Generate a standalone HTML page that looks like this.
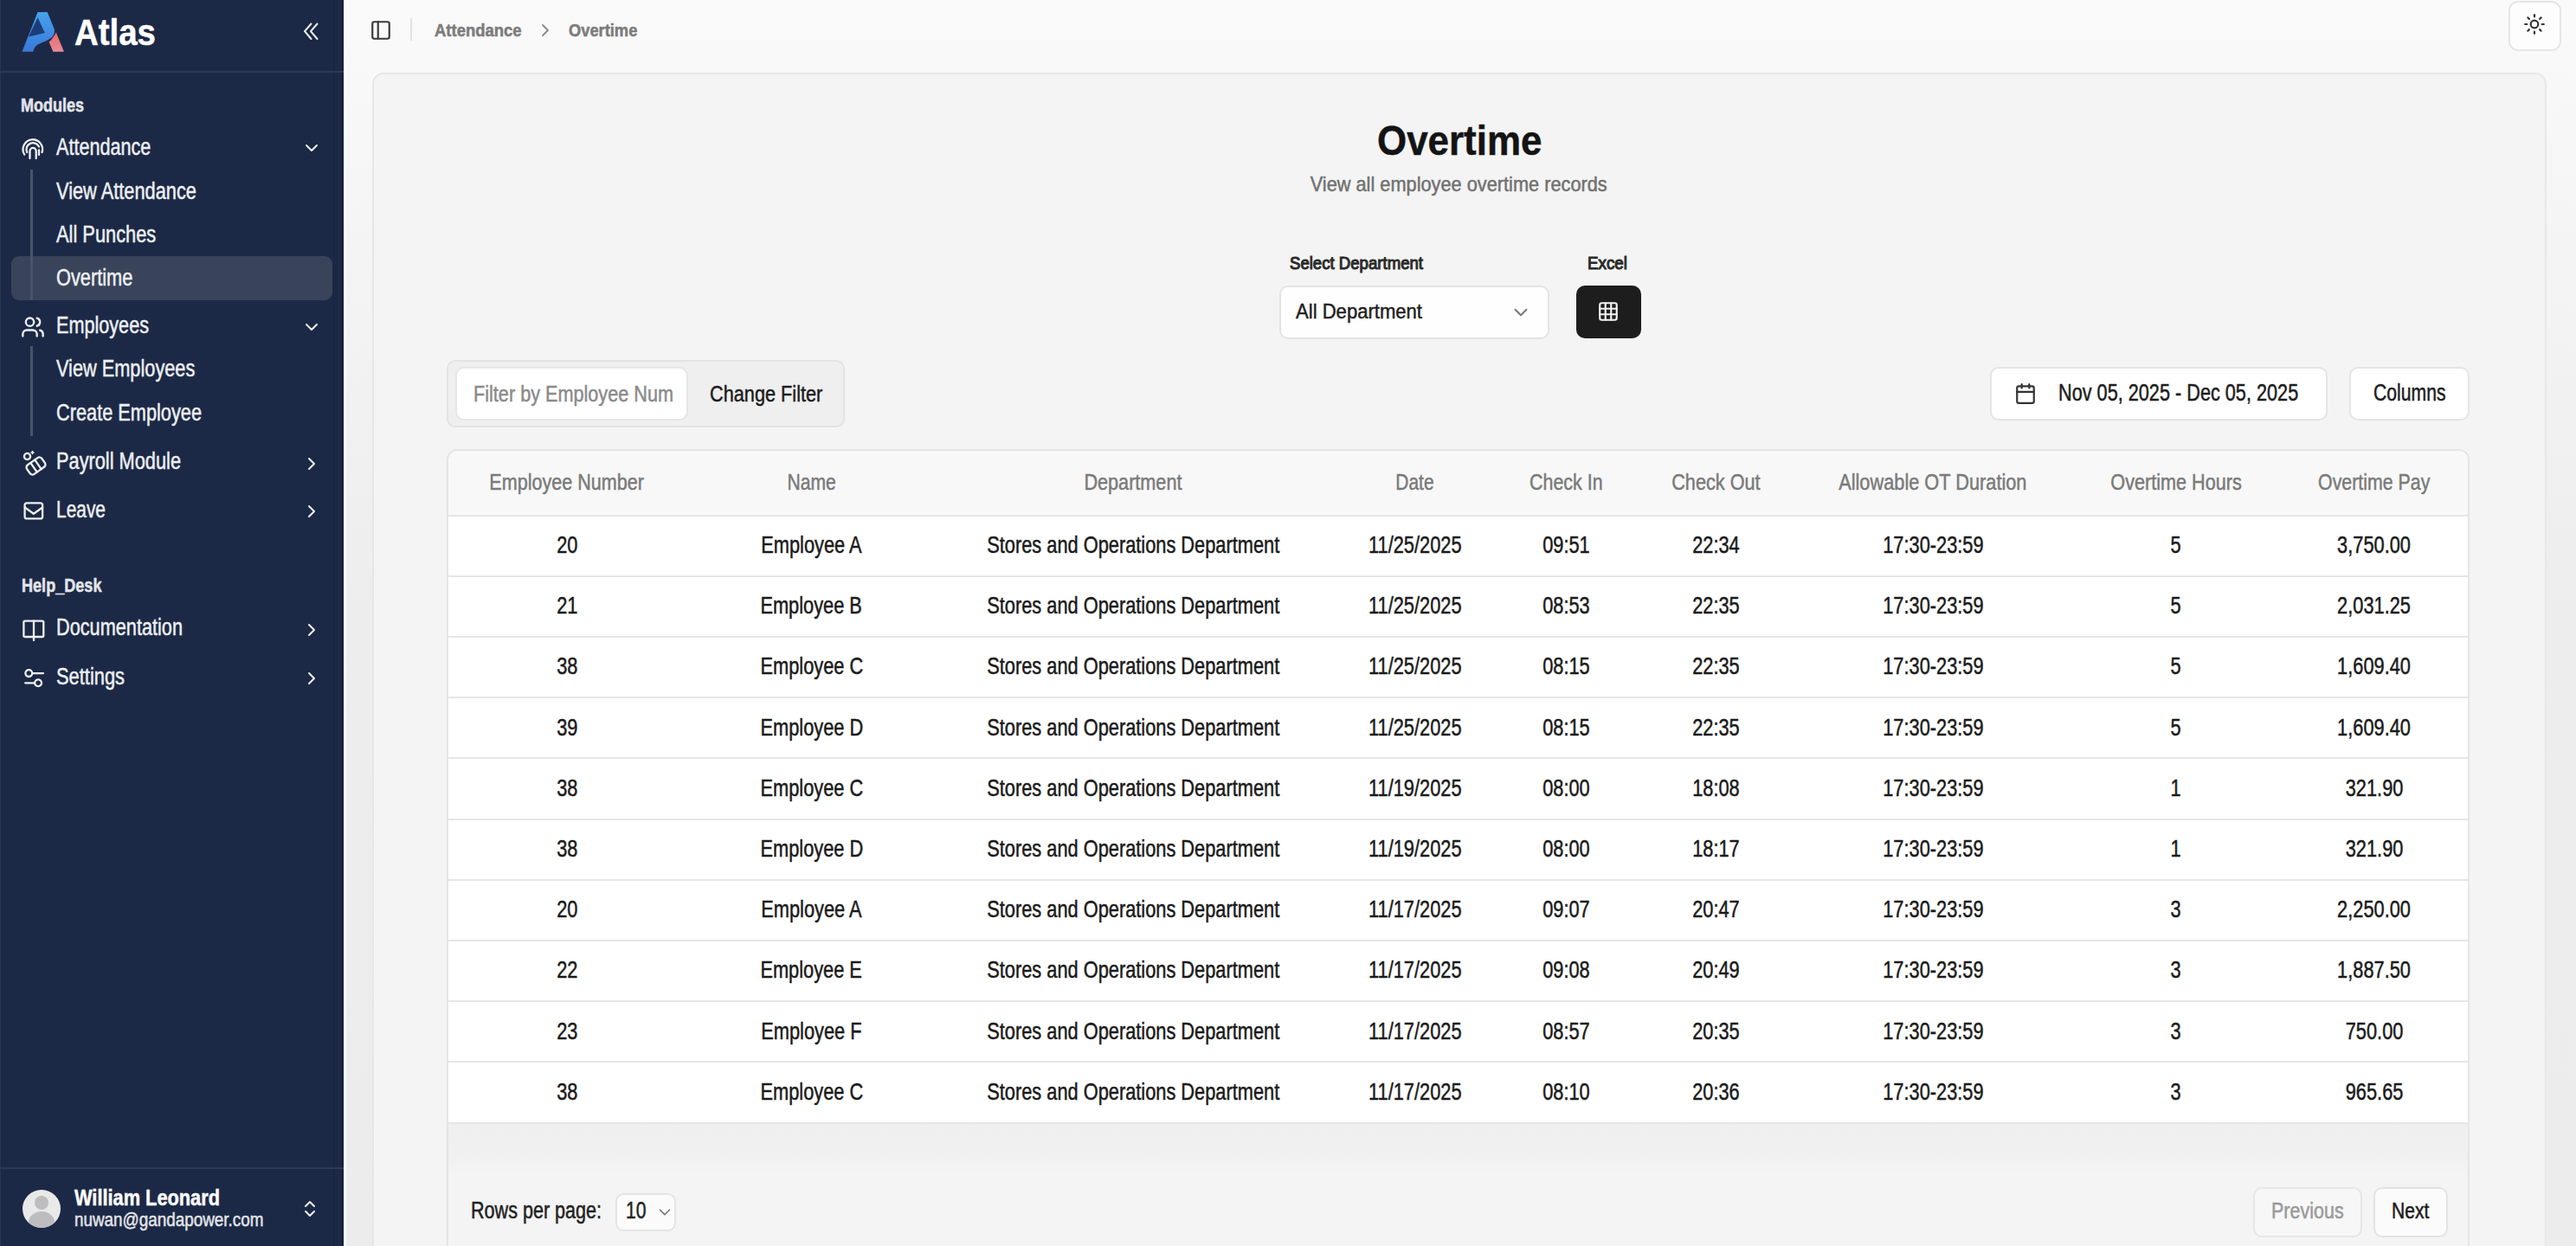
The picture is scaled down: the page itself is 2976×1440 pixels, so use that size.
<!DOCTYPE html>
<html><head><meta charset="utf-8"><title>Overtime</title>
<style>
html,body{margin:0;padding:0;}
body{width:2976px;height:1440px;overflow:hidden;position:relative;background:linear-gradient(180deg,#fafafa 0px,#f4f4f4 300px,#ededed 700px,#ececec 1440px);font-family:"Liberation Sans",sans-serif;}
.abs{position:absolute;}
.t{position:absolute;white-space:nowrap;line-height:1;-webkit-text-stroke:.5px currentColor;}
.tc{position:absolute;width:1200px;text-align:center;white-space:nowrap;line-height:1;}
.tc span{display:inline-block;transform-origin:50% 0;-webkit-text-stroke:.5px currentColor;}
svg{position:absolute;overflow:visible;}
#sb{position:absolute;left:0;top:0;width:397px;height:1440px;background:#1c2946;}
</style></head><body>
<!-- sidebar -->
<div id="sb"></div>
<div class="abs" style="left:0;top:0;width:1px;height:1440px;background:#2a3550"></div>
<div class="abs" style="left:385px;top:0;width:1px;height:1440px;background:#18233d"></div>
<div class="abs" style="left:395px;top:0;width:2px;height:1440px;background:#141c30"></div>
<div class="abs" style="left:397px;top:0;width:3px;height:1440px;background:#ffffff"></div>
<div class="abs" style="left:0;top:82px;width:397px;height:2px;background:#2e3a54"></div>
<div class="abs" style="left:0;top:1349px;width:397px;height:2px;background:#2e3a54"></div>
<!-- active item -->
<div class="abs" style="left:13px;top:296px;width:371px;height:51px;border-radius:9px;background:#39445a"></div>
<!-- sub nav lines -->
<div class="abs" style="left:35px;top:196px;width:3px;height:151px;background:#4a5469"></div>
<div class="abs" style="left:35px;top:400px;width:3px;height:104px;background:#4a5469"></div>
<!-- logo -->
<svg style="left:0;top:0" width="100" height="80" viewBox="0 0 100 80">
 <defs>
  <linearGradient id="lgb" x1="0" y1="0" x2="0" y2="1"><stop offset="0" stop-color="#45a3ec"/><stop offset="1" stop-color="#3b78d8"/></linearGradient>
  <linearGradient id="lgr" x1="0" y1="0" x2="0" y2="1"><stop offset="0" stop-color="#e86a6a"/><stop offset="1" stop-color="#e98a96"/></linearGradient>
 </defs>
 <path d="M25.5 59.8 L43.6 14 L54.7 14 L62.9 34 Q63.5 40 59.5 43.6 Q55 47 44 51.3 Q39.5 54 38.3 59.8 Z" fill="url(#lgb)"/>
 <path d="M33 42.4 L43.6 20.3 L51.8 38.1 Z" fill="#1e3c7a"/>
 <path d="M64.8 37.4 L73.9 59.8 L61.4 59.8 L56.6 48.4 Q60 46 64.8 37.4 Z" fill="url(#lgr)"/>
</svg>
<!-- collapse chevrons -->
<svg style="left:0;top:0" width="400" height="60" viewBox="0 0 400 60" fill="none" stroke="#eef0f4" stroke-width="2" stroke-linecap="round" stroke-linejoin="round"><path d="M359.5 27.5 L352 36.2 L359.5 45"/><path d="M366.5 27.5 L359 36.2 L366.5 45"/></svg>
<!-- nav icons -->
<svg style="left:0;top:0" width="60" height="800" viewBox="0 0 60 800" fill="none" stroke="#eef0f4" stroke-width="2.3" stroke-linecap="round" stroke-linejoin="round">
 <path d="M28.2 178.5 A11.3 11.3 0 1 1 48.6 176"/>
 <path d="M31.2 176 A7 7 0 1 1 45 169.5"/>
 <path d="M34.5 183 V174.5 A3.6 3.6 0 0 1 41.7 174.5 V183"/>
 <path d="M45 173.5 V179"/>
 <g transform="translate(41.5 538.5) rotate(-35)"><rect x="-10.5" y="-6.5" width="21" height="13" rx="3.5"/><path d="M-3 -6.5 V6.5"/><path d="M3 -6.5 V6.5"/></g>
 <circle cx="31.5" cy="527.5" r="3.6"/>
 <path d="M36 523 h3 M37.5 521.5 v3" stroke-width="1.6"/>
 <rect x="28.6" y="581.3" width="20.5" height="18.1" rx="2.5"/>
 <path d="M28.8 586.5 L38.9 593.8 L49 586.5"/>
 <rect x="27.4" y="717.6" width="22.9" height="18.4" rx="1.5"/>
 <path d="M39 717.6 V740"/>
 <path d="M38 778.1 H50"/><circle cx="33.3" cy="778.1" r="3.9"/>
 <path d="M29.2 789.3 H39.5"/><circle cx="44.1" cy="789.3" r="3.9"/>
</svg>
<svg style="left:24px;top:364px" width="28" height="28" viewBox="0 0 24 24" fill="none" stroke="#eef0f4" stroke-width="2" stroke-linecap="round" stroke-linejoin="round"><path d="M16 21v-2a4 4 0 0 0-4-4H6a4 4 0 0 0-4 4v2"/><circle cx="9" cy="7" r="4"/><path d="M22 21v-2a4 4 0 0 0-3-3.87"/><path d="M16 3.13a4 4 0 0 1 0 7.75"/></svg>
<!-- chevrons -->
<svg style="left:348px;top:159px" width="24" height="24" viewBox="0 0 24 24" fill="none" stroke="#eef0f4" stroke-width="2" stroke-linecap="round" stroke-linejoin="round"><path d="m6 9 6 6 6-6"/></svg>
<svg style="left:348px;top:366px" width="24" height="24" viewBox="0 0 24 24" fill="none" stroke="#eef0f4" stroke-width="2" stroke-linecap="round" stroke-linejoin="round"><path d="m6 9 6 6 6-6"/></svg>
<svg style="left:348px;top:524px" width="24" height="24" viewBox="0 0 24 24" fill="none" stroke="#eef0f4" stroke-width="2" stroke-linecap="round" stroke-linejoin="round"><path d="m9 18 6-6-6-6"/></svg>
<svg style="left:348px;top:578.5px" width="24" height="24" viewBox="0 0 24 24" fill="none" stroke="#eef0f4" stroke-width="2" stroke-linecap="round" stroke-linejoin="round"><path d="m9 18 6-6-6-6"/></svg>
<svg style="left:348px;top:716px" width="24" height="24" viewBox="0 0 24 24" fill="none" stroke="#eef0f4" stroke-width="2" stroke-linecap="round" stroke-linejoin="round"><path d="m9 18 6-6-6-6"/></svg>
<svg style="left:348px;top:772px" width="24" height="24" viewBox="0 0 24 24" fill="none" stroke="#eef0f4" stroke-width="2" stroke-linecap="round" stroke-linejoin="round"><path d="m9 18 6-6-6-6"/></svg>
<!-- user -->
<div class="abs" style="left:26px;top:1375px;width:44px;height:44px;border-radius:50%;background:#e9e9e9;overflow:hidden">
  <div class="abs" style="left:14px;top:7px;width:16px;height:16px;border-radius:50%;background:#bdbdc0"></div>
  <div class="abs" style="left:7px;top:25px;width:30px;height:26px;border-radius:50%;background:#bdbdc0"></div>
</div>
<svg style="left:346px;top:1385px" width="24" height="24" viewBox="0 0 24 24" fill="none" stroke="#eef0f4" stroke-width="2" stroke-linecap="round" stroke-linejoin="round"><path d="m7 15 5 5 5-5"/><path d="m7 9 5-5 5 5"/></svg>

<!-- main header -->
<svg style="left:427px;top:22px" width="26" height="26" viewBox="0 0 24 24" fill="none" stroke="#3a3a3a" stroke-width="2" stroke-linecap="round" stroke-linejoin="round"><rect width="18" height="18" x="3" y="3" rx="2"/><path d="M9 3v18"/></svg>
<div class="abs" style="left:474px;top:21px;width:2px;height:26px;background:#e2e2e2"></div>
<svg style="left:618px;top:23px" width="24" height="24" viewBox="0 0 24 24" fill="none" stroke="#8a8a8a" stroke-width="1.8" stroke-linecap="round" stroke-linejoin="round"><path d="m9 18 6-6-6-6"/></svg>
<div class="abs" style="left:2898px;top:1px;width:57px;height:54px;border:2px solid #e6e6e6;border-radius:11px;background:#fdfdfd"></div>
<svg style="left:2915px;top:15px" width="26" height="26" viewBox="0 0 24 24" fill="none" stroke="#333" stroke-width="2" stroke-linecap="round" stroke-linejoin="round"><circle cx="12" cy="12" r="4"/><path d="M12 2v2"/><path d="M12 20v2"/><path d="m4.93 4.93 1.41 1.41"/><path d="m17.66 17.66 1.41 1.41"/><path d="M2 12h2"/><path d="M20 12h2"/><path d="m6.34 17.66-1.41 1.41"/><path d="m19.07 4.93-1.41 1.41"/></svg>

<!-- card -->
<div class="abs" style="left:430px;top:84px;width:2508px;height:1400px;border:2px solid #e7e7e7;border-radius:13px;background:#f4f4f4"></div>

<!-- department select -->
<div class="abs" style="left:1478px;top:330px;width:308px;height:58px;border:2px solid #e4e4e4;border-radius:10px;background:#fefefe"></div>
<svg style="left:1744px;top:348px" width="26" height="26" viewBox="0 0 24 24" fill="none" stroke="#777" stroke-width="1.8" stroke-linecap="round" stroke-linejoin="round"><path d="m6 9 6 6 6-6"/></svg>
<div class="abs" style="left:1821px;top:330px;width:75px;height:61px;border-radius:10px;background:#1d1d1d"></div>
<svg style="left:1845px;top:347px" width="26" height="26" viewBox="0 0 24 24" fill="none" stroke="#f2f2f2" stroke-width="2" stroke-linecap="round" stroke-linejoin="round"><rect width="18" height="18" x="3" y="3" rx="2"/><path d="M3 9h18"/><path d="M3 15h18"/><path d="M9 3v18"/><path d="M15 3v18"/></svg>

<!-- filter group -->
<div class="abs" style="left:516px;top:416px;width:456px;height:74px;border:2px solid #e3e3e3;border-radius:10px;background:#efefef"></div>
<div class="abs" style="left:526px;top:424px;width:265px;height:58px;border:2px solid #e6e6e6;border-radius:10px;background:#ffffff"></div>

<!-- date range + columns -->
<div class="abs" style="left:2299px;top:424px;width:386px;height:58px;border:2px solid #e4e4e4;border-radius:10px;background:#ffffff"></div>
<svg style="left:2327px;top:442px" width="26" height="26" viewBox="0 0 24 24" fill="none" stroke="#333" stroke-width="2" stroke-linecap="round" stroke-linejoin="round"><path d="M8 2v4"/><path d="M16 2v4"/><rect width="18" height="18" x="3" y="4" rx="2"/><path d="M3 10h18"/></svg>
<div class="abs" style="left:2714px;top:424px;width:135px;height:58px;border:2px solid #e4e4e4;border-radius:10px;background:#ffffff"></div>

<!-- table container -->
<div class="abs" style="left:516px;top:519px;width:2333px;height:1000px;border:2px solid #e5e5e5;border-radius:12px;background:#f4f4f4;overflow:hidden">
  <div class="abs" style="left:0;top:0;width:2333px;height:75px;background:#f8f8f8"></div>
  <div class="abs" style="left:0;top:75px;width:2333px;height:702px;background:#ffffff"></div>
  <div class="abs" style="left:0;top:777px;width:2333px;height:60px;background:linear-gradient(180deg,#efefef 0,#f0f0f0 60%,#f4f4f4 100%)"></div>
</div>
<!-- row lines -->
<div class="abs" style="left:518px;top:594.5px;width:2333px;height:2px;background:#e6e6e6"></div><div class="abs" style="left:518px;top:664.7px;width:2333px;height:2px;background:#e6e6e6"></div><div class="abs" style="left:518px;top:734.9px;width:2333px;height:2px;background:#e6e6e6"></div><div class="abs" style="left:518px;top:805.1px;width:2333px;height:2px;background:#e6e6e6"></div><div class="abs" style="left:518px;top:875.3px;width:2333px;height:2px;background:#e6e6e6"></div><div class="abs" style="left:518px;top:945.5px;width:2333px;height:2px;background:#e6e6e6"></div><div class="abs" style="left:518px;top:1015.7px;width:2333px;height:2px;background:#e6e6e6"></div><div class="abs" style="left:518px;top:1085.9px;width:2333px;height:2px;background:#e6e6e6"></div><div class="abs" style="left:518px;top:1156.1px;width:2333px;height:2px;background:#e6e6e6"></div><div class="abs" style="left:518px;top:1226.3px;width:2333px;height:2px;background:#e6e6e6"></div><div class="abs" style="left:518px;top:1296.5px;width:2333px;height:2px;background:#e6e6e6"></div>
<!-- rows select -->
<div class="abs" style="left:711px;top:1379px;width:66px;height:40px;border:2px solid #e4e4e4;border-radius:9px;background:#fbfbfb"></div>
<svg style="left:757px;top:1390px" width="22" height="22" viewBox="0 0 24 24" fill="none" stroke="#777" stroke-width="1.8" stroke-linecap="round" stroke-linejoin="round"><path d="m6 9 6 6 6-6"/></svg>
<div class="abs" style="left:2603px;top:1372px;width:122px;height:54px;border:2px solid #e6e6e6;border-radius:10px;background:#f7f7f7"></div>
<div class="abs" style="left:2742px;top:1372px;width:82px;height:54px;border:2px solid #e2e2e2;border-radius:10px;background:#fbfbfb"></div>

<div class="t" id="t0" style="left:86px;top:17.30px;font-size:42px;font-weight:700;color:#ffffff;transform:scaleX(0.9153);transform-origin:0 0;">Atlas</div>
<div class="t" id="t1" style="left:24px;top:110.80px;font-size:22px;font-weight:700;color:#e3e5ea;transform:scaleX(0.8181);transform-origin:0 0;">Modules</div>
<div class="t" id="t2" style="left:65px;top:157.05px;font-size:27px;font-weight:400;color:#eef0f4;transform:scaleX(0.8008);transform-origin:0 0;">Attendance</div>
<div class="t" id="t3" style="left:65px;top:207.55px;font-size:27px;font-weight:400;color:#eef0f4;transform:scaleX(0.8069);transform-origin:0 0;">View Attendance</div>
<div class="t" id="t4" style="left:65px;top:258.05px;font-size:27px;font-weight:400;color:#eef0f4;transform:scaleX(0.8086);transform-origin:0 0;">All Punches</div>
<div class="t" id="t5" style="left:65px;top:307.85px;font-size:27px;font-weight:400;color:#eef0f4;transform:scaleX(0.8062);transform-origin:0 0;">Overtime</div>
<div class="t" id="t6" style="left:65px;top:363.45px;font-size:27px;font-weight:400;color:#eef0f4;transform:scaleX(0.8010);transform-origin:0 0;">Employees</div>
<div class="t" id="t7" style="left:65px;top:412.75px;font-size:27px;font-weight:400;color:#eef0f4;transform:scaleX(0.8051);transform-origin:0 0;">View Employees</div>
<div class="t" id="t8" style="left:65px;top:463.85px;font-size:27px;font-weight:400;color:#eef0f4;transform:scaleX(0.8053);transform-origin:0 0;">Create Employee</div>
<div class="t" id="t9" style="left:65px;top:519.55px;font-size:27px;font-weight:400;color:#eef0f4;transform:scaleX(0.8063);transform-origin:0 0;">Payroll Module</div>
<div class="t" id="t10" style="left:65px;top:576.05px;font-size:27px;font-weight:400;color:#eef0f4;transform:scaleX(0.7747);transform-origin:0 0;">Leave</div>
<div class="t" id="t11" style="left:65px;top:712.35px;font-size:27px;font-weight:400;color:#eef0f4;transform:scaleX(0.8039);transform-origin:0 0;">Documentation</div>
<div class="t" id="t12" style="left:65px;top:768.75px;font-size:27px;font-weight:400;color:#eef0f4;transform:scaleX(0.8097);transform-origin:0 0;">Settings</div>
<div class="t" id="t13" style="left:24.5px;top:666.00px;font-size:22px;font-weight:700;color:#e3e5ea;transform:scaleX(0.8221);transform-origin:0 0;">Help_Desk</div>
<div class="t" id="t14" style="left:85.6px;top:1371.20px;font-size:26px;font-weight:700;color:#ffffff;transform:scaleX(0.8376);transform-origin:0 0;">William Leonard</div>
<div class="t" id="t15" style="left:85.6px;top:1399.10px;font-size:22px;font-weight:400;color:#e3e5ea;transform:scaleX(0.8574);transform-origin:0 0;">nuwan@gandapower.com</div>
<div class="t" id="t16" style="left:502px;top:23.75px;font-size:21px;font-weight:700;color:#7b7b7b;transform:scaleX(0.8797);transform-origin:0 0;">Attendance</div>
<div class="t" id="t17" style="left:657px;top:23.75px;font-size:21px;font-weight:700;color:#7b7b7b;transform:scaleX(0.8710);transform-origin:0 0;">Overtime</div>
<div class="tc" style="left:1086.20px;top:138.15px;font-size:49px;font-weight:700;color:#141414;"><span id="t18" style="transform:scaleX(0.8963);">Overtime</span></div>
<div class="tc" style="left:1085.50px;top:200.80px;font-size:24px;font-weight:400;color:#707070;"><span id="t19" style="transform:scaleX(0.9065);">View all employee overtime records</span></div>
<div class="t" id="t20" style="left:1490px;top:294.27px;font-size:20.5px;font-weight:400;color:#2a2a2a;transform:scaleX(0.9070);transform-origin:0 0;-webkit-text-stroke:1.1px currentColor;">Select Department</div>
<div class="t" id="t21" style="left:1834px;top:294.27px;font-size:20.5px;font-weight:400;color:#2a2a2a;transform:scaleX(0.9174);transform-origin:0 0;-webkit-text-stroke:1.1px currentColor;">Excel</div>
<div class="t" id="t22" style="left:1497px;top:347.98px;font-size:24.5px;font-weight:400;color:#1e1e1e;transform:scaleX(0.9010);transform-origin:0 0;">All Department</div>
<div class="t" id="t23" style="left:546.6px;top:441.60px;font-size:26px;font-weight:400;color:#8a8a8a;transform:scaleX(0.8327);transform-origin:0 0;">Filter by Employee Num</div>
<div class="t" id="t24" style="left:820px;top:441.60px;font-size:26px;font-weight:400;color:#1c1c1c;transform:scaleX(0.8348);transform-origin:0 0;">Change Filter</div>
<div class="t" id="t25" style="left:2377.8px;top:441.05px;font-size:27px;font-weight:400;color:#1c1c1c;transform:scaleX(0.8029);transform-origin:0 0;">Nov 05, 2025 - Dec 05, 2025</div>
<div class="t" id="t26" style="left:2742.4px;top:441.05px;font-size:27px;font-weight:400;color:#1c1c1c;transform:scaleX(0.7846);transform-origin:0 0;">Columns</div>
<div class="tc" style="left:55.00px;top:543.90px;font-size:26px;font-weight:400;color:#7a7a7a;"><span id="t27" style="transform:scaleX(0.8295);">Employee Number</span></div>
<div class="tc" style="left:337.50px;top:543.90px;font-size:26px;font-weight:400;color:#7a7a7a;"><span id="t28" style="transform:scaleX(0.8117);">Name</span></div>
<div class="tc" style="left:709.00px;top:543.90px;font-size:26px;font-weight:400;color:#7a7a7a;"><span id="t29" style="transform:scaleX(0.8318);">Department</span></div>
<div class="tc" style="left:1034.50px;top:543.90px;font-size:26px;font-weight:400;color:#7a7a7a;"><span id="t30" style="transform:scaleX(0.8048);">Date</span></div>
<div class="tc" style="left:1209.00px;top:543.90px;font-size:26px;font-weight:400;color:#7a7a7a;"><span id="t31" style="transform:scaleX(0.8235);">Check In</span></div>
<div class="tc" style="left:1382.00px;top:543.90px;font-size:26px;font-weight:400;color:#7a7a7a;"><span id="t32" style="transform:scaleX(0.8337);">Check Out</span></div>
<div class="tc" style="left:1633.00px;top:543.90px;font-size:26px;font-weight:400;color:#7a7a7a;"><span id="t33" style="transform:scaleX(0.8369);">Allowable OT Duration</span></div>
<div class="tc" style="left:1914.00px;top:543.90px;font-size:26px;font-weight:400;color:#7a7a7a;"><span id="t34" style="transform:scaleX(0.8317);">Overtime Hours</span></div>
<div class="tc" style="left:2143.00px;top:543.90px;font-size:26px;font-weight:400;color:#7a7a7a;"><span id="t35" style="transform:scaleX(0.8210);">Overtime Pay</span></div>
<div class="tc" style="left:55.00px;top:615.92px;font-size:27.5px;font-weight:400;color:#1a1a1a;"><span id="t36" style="transform:scaleX(0.7925);">20</span></div>
<div class="tc" style="left:337.50px;top:615.92px;font-size:27.5px;font-weight:400;color:#1a1a1a;"><span id="t37" style="transform:scaleX(0.7925);">Employee A</span></div>
<div class="tc" style="left:709.00px;top:615.92px;font-size:27.5px;font-weight:400;color:#1a1a1a;"><span id="t38" style="transform:scaleX(0.7925);">Stores and Operations Department</span></div>
<div class="tc" style="left:1034.50px;top:615.92px;font-size:27.5px;font-weight:400;color:#1a1a1a;"><span id="t39" style="transform:scaleX(0.7925);">11/25/2025</span></div>
<div class="tc" style="left:1209.00px;top:615.92px;font-size:27.5px;font-weight:400;color:#1a1a1a;"><span id="t40" style="transform:scaleX(0.7925);">09:51</span></div>
<div class="tc" style="left:1382.00px;top:615.92px;font-size:27.5px;font-weight:400;color:#1a1a1a;"><span id="t41" style="transform:scaleX(0.7925);">22:34</span></div>
<div class="tc" style="left:1633.00px;top:615.92px;font-size:27.5px;font-weight:400;color:#1a1a1a;"><span id="t42" style="transform:scaleX(0.7925);">17:30-23:59</span></div>
<div class="tc" style="left:1914.00px;top:615.92px;font-size:27.5px;font-weight:400;color:#1a1a1a;"><span id="t43" style="transform:scaleX(0.7925);">5</span></div>
<div class="tc" style="left:2143.00px;top:615.92px;font-size:27.5px;font-weight:400;color:#1a1a1a;"><span id="t44" style="transform:scaleX(0.7925);">3,750.00</span></div>
<div class="tc" style="left:55.00px;top:686.12px;font-size:27.5px;font-weight:400;color:#1a1a1a;"><span id="t45" style="transform:scaleX(0.7925);">21</span></div>
<div class="tc" style="left:337.50px;top:686.12px;font-size:27.5px;font-weight:400;color:#1a1a1a;"><span id="t46" style="transform:scaleX(0.7925);">Employee B</span></div>
<div class="tc" style="left:709.00px;top:686.12px;font-size:27.5px;font-weight:400;color:#1a1a1a;"><span id="t47" style="transform:scaleX(0.7925);">Stores and Operations Department</span></div>
<div class="tc" style="left:1034.50px;top:686.12px;font-size:27.5px;font-weight:400;color:#1a1a1a;"><span id="t48" style="transform:scaleX(0.7925);">11/25/2025</span></div>
<div class="tc" style="left:1209.00px;top:686.12px;font-size:27.5px;font-weight:400;color:#1a1a1a;"><span id="t49" style="transform:scaleX(0.7925);">08:53</span></div>
<div class="tc" style="left:1382.00px;top:686.12px;font-size:27.5px;font-weight:400;color:#1a1a1a;"><span id="t50" style="transform:scaleX(0.7925);">22:35</span></div>
<div class="tc" style="left:1633.00px;top:686.12px;font-size:27.5px;font-weight:400;color:#1a1a1a;"><span id="t51" style="transform:scaleX(0.7925);">17:30-23:59</span></div>
<div class="tc" style="left:1914.00px;top:686.12px;font-size:27.5px;font-weight:400;color:#1a1a1a;"><span id="t52" style="transform:scaleX(0.7925);">5</span></div>
<div class="tc" style="left:2143.00px;top:686.12px;font-size:27.5px;font-weight:400;color:#1a1a1a;"><span id="t53" style="transform:scaleX(0.7925);">2,031.25</span></div>
<div class="tc" style="left:55.00px;top:756.32px;font-size:27.5px;font-weight:400;color:#1a1a1a;"><span id="t54" style="transform:scaleX(0.7925);">38</span></div>
<div class="tc" style="left:337.50px;top:756.32px;font-size:27.5px;font-weight:400;color:#1a1a1a;"><span id="t55" style="transform:scaleX(0.7925);">Employee C</span></div>
<div class="tc" style="left:709.00px;top:756.32px;font-size:27.5px;font-weight:400;color:#1a1a1a;"><span id="t56" style="transform:scaleX(0.7925);">Stores and Operations Department</span></div>
<div class="tc" style="left:1034.50px;top:756.32px;font-size:27.5px;font-weight:400;color:#1a1a1a;"><span id="t57" style="transform:scaleX(0.7925);">11/25/2025</span></div>
<div class="tc" style="left:1209.00px;top:756.32px;font-size:27.5px;font-weight:400;color:#1a1a1a;"><span id="t58" style="transform:scaleX(0.7925);">08:15</span></div>
<div class="tc" style="left:1382.00px;top:756.32px;font-size:27.5px;font-weight:400;color:#1a1a1a;"><span id="t59" style="transform:scaleX(0.7925);">22:35</span></div>
<div class="tc" style="left:1633.00px;top:756.32px;font-size:27.5px;font-weight:400;color:#1a1a1a;"><span id="t60" style="transform:scaleX(0.7925);">17:30-23:59</span></div>
<div class="tc" style="left:1914.00px;top:756.32px;font-size:27.5px;font-weight:400;color:#1a1a1a;"><span id="t61" style="transform:scaleX(0.7925);">5</span></div>
<div class="tc" style="left:2143.00px;top:756.32px;font-size:27.5px;font-weight:400;color:#1a1a1a;"><span id="t62" style="transform:scaleX(0.7925);">1,609.40</span></div>
<div class="tc" style="left:55.00px;top:826.52px;font-size:27.5px;font-weight:400;color:#1a1a1a;"><span id="t63" style="transform:scaleX(0.7925);">39</span></div>
<div class="tc" style="left:337.50px;top:826.52px;font-size:27.5px;font-weight:400;color:#1a1a1a;"><span id="t64" style="transform:scaleX(0.7925);">Employee D</span></div>
<div class="tc" style="left:709.00px;top:826.52px;font-size:27.5px;font-weight:400;color:#1a1a1a;"><span id="t65" style="transform:scaleX(0.7925);">Stores and Operations Department</span></div>
<div class="tc" style="left:1034.50px;top:826.52px;font-size:27.5px;font-weight:400;color:#1a1a1a;"><span id="t66" style="transform:scaleX(0.7925);">11/25/2025</span></div>
<div class="tc" style="left:1209.00px;top:826.52px;font-size:27.5px;font-weight:400;color:#1a1a1a;"><span id="t67" style="transform:scaleX(0.7925);">08:15</span></div>
<div class="tc" style="left:1382.00px;top:826.52px;font-size:27.5px;font-weight:400;color:#1a1a1a;"><span id="t68" style="transform:scaleX(0.7925);">22:35</span></div>
<div class="tc" style="left:1633.00px;top:826.52px;font-size:27.5px;font-weight:400;color:#1a1a1a;"><span id="t69" style="transform:scaleX(0.7925);">17:30-23:59</span></div>
<div class="tc" style="left:1914.00px;top:826.52px;font-size:27.5px;font-weight:400;color:#1a1a1a;"><span id="t70" style="transform:scaleX(0.7925);">5</span></div>
<div class="tc" style="left:2143.00px;top:826.52px;font-size:27.5px;font-weight:400;color:#1a1a1a;"><span id="t71" style="transform:scaleX(0.7925);">1,609.40</span></div>
<div class="tc" style="left:55.00px;top:896.72px;font-size:27.5px;font-weight:400;color:#1a1a1a;"><span id="t72" style="transform:scaleX(0.7925);">38</span></div>
<div class="tc" style="left:337.50px;top:896.72px;font-size:27.5px;font-weight:400;color:#1a1a1a;"><span id="t73" style="transform:scaleX(0.7925);">Employee C</span></div>
<div class="tc" style="left:709.00px;top:896.72px;font-size:27.5px;font-weight:400;color:#1a1a1a;"><span id="t74" style="transform:scaleX(0.7925);">Stores and Operations Department</span></div>
<div class="tc" style="left:1034.50px;top:896.72px;font-size:27.5px;font-weight:400;color:#1a1a1a;"><span id="t75" style="transform:scaleX(0.7925);">11/19/2025</span></div>
<div class="tc" style="left:1209.00px;top:896.72px;font-size:27.5px;font-weight:400;color:#1a1a1a;"><span id="t76" style="transform:scaleX(0.7925);">08:00</span></div>
<div class="tc" style="left:1382.00px;top:896.72px;font-size:27.5px;font-weight:400;color:#1a1a1a;"><span id="t77" style="transform:scaleX(0.7925);">18:08</span></div>
<div class="tc" style="left:1633.00px;top:896.72px;font-size:27.5px;font-weight:400;color:#1a1a1a;"><span id="t78" style="transform:scaleX(0.7925);">17:30-23:59</span></div>
<div class="tc" style="left:1914.00px;top:896.72px;font-size:27.5px;font-weight:400;color:#1a1a1a;"><span id="t79" style="transform:scaleX(0.7925);">1</span></div>
<div class="tc" style="left:2143.00px;top:896.72px;font-size:27.5px;font-weight:400;color:#1a1a1a;"><span id="t80" style="transform:scaleX(0.7925);">321.90</span></div>
<div class="tc" style="left:55.00px;top:966.92px;font-size:27.5px;font-weight:400;color:#1a1a1a;"><span id="t81" style="transform:scaleX(0.7925);">38</span></div>
<div class="tc" style="left:337.50px;top:966.92px;font-size:27.5px;font-weight:400;color:#1a1a1a;"><span id="t82" style="transform:scaleX(0.7925);">Employee D</span></div>
<div class="tc" style="left:709.00px;top:966.92px;font-size:27.5px;font-weight:400;color:#1a1a1a;"><span id="t83" style="transform:scaleX(0.7925);">Stores and Operations Department</span></div>
<div class="tc" style="left:1034.50px;top:966.92px;font-size:27.5px;font-weight:400;color:#1a1a1a;"><span id="t84" style="transform:scaleX(0.7925);">11/19/2025</span></div>
<div class="tc" style="left:1209.00px;top:966.92px;font-size:27.5px;font-weight:400;color:#1a1a1a;"><span id="t85" style="transform:scaleX(0.7925);">08:00</span></div>
<div class="tc" style="left:1382.00px;top:966.92px;font-size:27.5px;font-weight:400;color:#1a1a1a;"><span id="t86" style="transform:scaleX(0.7925);">18:17</span></div>
<div class="tc" style="left:1633.00px;top:966.92px;font-size:27.5px;font-weight:400;color:#1a1a1a;"><span id="t87" style="transform:scaleX(0.7925);">17:30-23:59</span></div>
<div class="tc" style="left:1914.00px;top:966.92px;font-size:27.5px;font-weight:400;color:#1a1a1a;"><span id="t88" style="transform:scaleX(0.7925);">1</span></div>
<div class="tc" style="left:2143.00px;top:966.92px;font-size:27.5px;font-weight:400;color:#1a1a1a;"><span id="t89" style="transform:scaleX(0.7925);">321.90</span></div>
<div class="tc" style="left:55.00px;top:1037.12px;font-size:27.5px;font-weight:400;color:#1a1a1a;"><span id="t90" style="transform:scaleX(0.7925);">20</span></div>
<div class="tc" style="left:337.50px;top:1037.12px;font-size:27.5px;font-weight:400;color:#1a1a1a;"><span id="t91" style="transform:scaleX(0.7925);">Employee A</span></div>
<div class="tc" style="left:709.00px;top:1037.12px;font-size:27.5px;font-weight:400;color:#1a1a1a;"><span id="t92" style="transform:scaleX(0.7925);">Stores and Operations Department</span></div>
<div class="tc" style="left:1034.50px;top:1037.12px;font-size:27.5px;font-weight:400;color:#1a1a1a;"><span id="t93" style="transform:scaleX(0.7925);">11/17/2025</span></div>
<div class="tc" style="left:1209.00px;top:1037.12px;font-size:27.5px;font-weight:400;color:#1a1a1a;"><span id="t94" style="transform:scaleX(0.7925);">09:07</span></div>
<div class="tc" style="left:1382.00px;top:1037.12px;font-size:27.5px;font-weight:400;color:#1a1a1a;"><span id="t95" style="transform:scaleX(0.7925);">20:47</span></div>
<div class="tc" style="left:1633.00px;top:1037.12px;font-size:27.5px;font-weight:400;color:#1a1a1a;"><span id="t96" style="transform:scaleX(0.7925);">17:30-23:59</span></div>
<div class="tc" style="left:1914.00px;top:1037.12px;font-size:27.5px;font-weight:400;color:#1a1a1a;"><span id="t97" style="transform:scaleX(0.7925);">3</span></div>
<div class="tc" style="left:2143.00px;top:1037.12px;font-size:27.5px;font-weight:400;color:#1a1a1a;"><span id="t98" style="transform:scaleX(0.7925);">2,250.00</span></div>
<div class="tc" style="left:55.00px;top:1107.33px;font-size:27.5px;font-weight:400;color:#1a1a1a;"><span id="t99" style="transform:scaleX(0.7925);">22</span></div>
<div class="tc" style="left:337.50px;top:1107.33px;font-size:27.5px;font-weight:400;color:#1a1a1a;"><span id="t100" style="transform:scaleX(0.7925);">Employee E</span></div>
<div class="tc" style="left:709.00px;top:1107.33px;font-size:27.5px;font-weight:400;color:#1a1a1a;"><span id="t101" style="transform:scaleX(0.7925);">Stores and Operations Department</span></div>
<div class="tc" style="left:1034.50px;top:1107.33px;font-size:27.5px;font-weight:400;color:#1a1a1a;"><span id="t102" style="transform:scaleX(0.7925);">11/17/2025</span></div>
<div class="tc" style="left:1209.00px;top:1107.33px;font-size:27.5px;font-weight:400;color:#1a1a1a;"><span id="t103" style="transform:scaleX(0.7925);">09:08</span></div>
<div class="tc" style="left:1382.00px;top:1107.33px;font-size:27.5px;font-weight:400;color:#1a1a1a;"><span id="t104" style="transform:scaleX(0.7925);">20:49</span></div>
<div class="tc" style="left:1633.00px;top:1107.33px;font-size:27.5px;font-weight:400;color:#1a1a1a;"><span id="t105" style="transform:scaleX(0.7925);">17:30-23:59</span></div>
<div class="tc" style="left:1914.00px;top:1107.33px;font-size:27.5px;font-weight:400;color:#1a1a1a;"><span id="t106" style="transform:scaleX(0.7925);">3</span></div>
<div class="tc" style="left:2143.00px;top:1107.33px;font-size:27.5px;font-weight:400;color:#1a1a1a;"><span id="t107" style="transform:scaleX(0.7925);">1,887.50</span></div>
<div class="tc" style="left:55.00px;top:1177.53px;font-size:27.5px;font-weight:400;color:#1a1a1a;"><span id="t108" style="transform:scaleX(0.7925);">23</span></div>
<div class="tc" style="left:337.50px;top:1177.53px;font-size:27.5px;font-weight:400;color:#1a1a1a;"><span id="t109" style="transform:scaleX(0.7925);">Employee F</span></div>
<div class="tc" style="left:709.00px;top:1177.53px;font-size:27.5px;font-weight:400;color:#1a1a1a;"><span id="t110" style="transform:scaleX(0.7925);">Stores and Operations Department</span></div>
<div class="tc" style="left:1034.50px;top:1177.53px;font-size:27.5px;font-weight:400;color:#1a1a1a;"><span id="t111" style="transform:scaleX(0.7925);">11/17/2025</span></div>
<div class="tc" style="left:1209.00px;top:1177.53px;font-size:27.5px;font-weight:400;color:#1a1a1a;"><span id="t112" style="transform:scaleX(0.7925);">08:57</span></div>
<div class="tc" style="left:1382.00px;top:1177.53px;font-size:27.5px;font-weight:400;color:#1a1a1a;"><span id="t113" style="transform:scaleX(0.7925);">20:35</span></div>
<div class="tc" style="left:1633.00px;top:1177.53px;font-size:27.5px;font-weight:400;color:#1a1a1a;"><span id="t114" style="transform:scaleX(0.7925);">17:30-23:59</span></div>
<div class="tc" style="left:1914.00px;top:1177.53px;font-size:27.5px;font-weight:400;color:#1a1a1a;"><span id="t115" style="transform:scaleX(0.7925);">3</span></div>
<div class="tc" style="left:2143.00px;top:1177.53px;font-size:27.5px;font-weight:400;color:#1a1a1a;"><span id="t116" style="transform:scaleX(0.7925);">750.00</span></div>
<div class="tc" style="left:55.00px;top:1247.72px;font-size:27.5px;font-weight:400;color:#1a1a1a;"><span id="t117" style="transform:scaleX(0.7925);">38</span></div>
<div class="tc" style="left:337.50px;top:1247.72px;font-size:27.5px;font-weight:400;color:#1a1a1a;"><span id="t118" style="transform:scaleX(0.7925);">Employee C</span></div>
<div class="tc" style="left:709.00px;top:1247.72px;font-size:27.5px;font-weight:400;color:#1a1a1a;"><span id="t119" style="transform:scaleX(0.7925);">Stores and Operations Department</span></div>
<div class="tc" style="left:1034.50px;top:1247.72px;font-size:27.5px;font-weight:400;color:#1a1a1a;"><span id="t120" style="transform:scaleX(0.7925);">11/17/2025</span></div>
<div class="tc" style="left:1209.00px;top:1247.72px;font-size:27.5px;font-weight:400;color:#1a1a1a;"><span id="t121" style="transform:scaleX(0.7925);">08:10</span></div>
<div class="tc" style="left:1382.00px;top:1247.72px;font-size:27.5px;font-weight:400;color:#1a1a1a;"><span id="t122" style="transform:scaleX(0.7925);">20:36</span></div>
<div class="tc" style="left:1633.00px;top:1247.72px;font-size:27.5px;font-weight:400;color:#1a1a1a;"><span id="t123" style="transform:scaleX(0.7925);">17:30-23:59</span></div>
<div class="tc" style="left:1914.00px;top:1247.72px;font-size:27.5px;font-weight:400;color:#1a1a1a;"><span id="t124" style="transform:scaleX(0.7925);">3</span></div>
<div class="tc" style="left:2143.00px;top:1247.72px;font-size:27.5px;font-weight:400;color:#1a1a1a;"><span id="t125" style="transform:scaleX(0.7925);">965.65</span></div>
<div class="t" id="t126" style="left:544px;top:1386.25px;font-size:27px;font-weight:400;color:#222222;transform:scaleX(0.7985);transform-origin:0 0;">Rows per page:</div>
<div class="t" id="t127" style="left:723px;top:1386.25px;font-size:27px;font-weight:400;color:#222222;transform:scaleX(0.7821);transform-origin:0 0;">10</div>
<div class="t" id="t128" style="left:2624.3px;top:1387.33px;font-size:25.5px;font-weight:400;color:#9a9a9a;transform:scaleX(0.8436);transform-origin:0 0;">Previous</div>
<div class="t" id="t129" style="left:2763px;top:1387.33px;font-size:25.5px;font-weight:400;color:#1c1c1c;transform:scaleX(0.8277);transform-origin:0 0;">Next</div>
</body></html>
